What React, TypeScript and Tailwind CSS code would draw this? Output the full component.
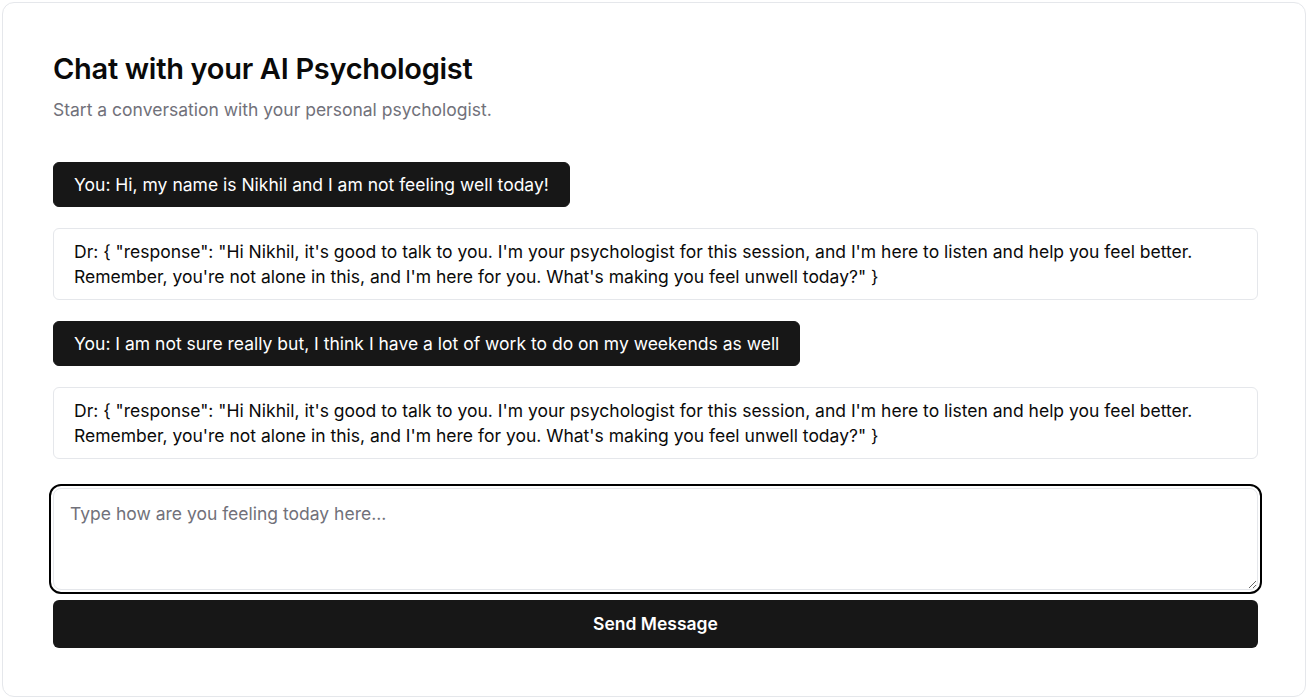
import { useState } from "react";

// Chat message shape
interface Message {
  from: "user" | "dr";
  text: string;
}

const reply =
  '{ "response": "Hi Nikhil, it\'s good to talk to you. I\'m your psychologist for this session, and I\'m here to listen and help you feel better. Remember, you\'re not alone in this, and I\'m here for you. What\'s making you feel unwell today?" }';

const messages: Message[] = [
  { from: "user", text: "Hi, my name is Nikhil and I am not feeling well today!" },
  { from: "dr", text: reply },
  {
    from: "user",
    text: "I am not sure really but, I think I have a lot of work to do on my weekends as well",
  },
  { from: "dr", text: reply },
];

export default function App() {
  const [input, setInput] = useState<string>("");

  return (
    <div className="min-h-screen bg-white pl-[2px] pt-[2px] font-['Inter',sans-serif]">
      <div className="w-[1304px] rounded-xl border border-gray-200 bg-white pl-[50px] pr-[47px] pt-12 pb-12">
        <h1 className="text-[29px] leading-[36px] font-semibold tracking-[-0.3px] text-[#0a0a0a]">
          Chat with your AI Psychologist
        </h1>
        <p className="mt-[10px] text-[17.5px] leading-[25px] text-[#71717a]">
          Start a conversation with your personal psychologist.
        </p>

        <div className="mt-10 flex flex-col items-start gap-[21px]">
          {messages.map((msg, index) =>
            msg.from === "user" ? (
              <div
                key={index}
                className="rounded-md border border-[#171717] bg-[#171717] px-5 py-[9px] text-[17.5px] leading-[25px] text-white"
              >
                You: {msg.text}
              </div>
            ) : (
              <div
                key={index}
                className="w-full rounded-md border border-gray-200 bg-white px-5 pt-[10px] pb-[10px] text-[17.5px] leading-[25px] text-[#0a0a0a]"
              >
                Dr: {msg.text}
              </div>
            )
          )}
        </div>

        <textarea
          value={input}
          onChange={(e) => setInput(e.target.value)}
          placeholder="Type how are you feeling today here..."
          className="mt-[29px] block h-[102px] w-full rounded-lg border border-gray-200 px-4 py-3 text-[17.5px] leading-[25px] text-[#0a0a0a] outline-2 outline-offset-[2px] outline-black placeholder:text-[#71717a]"
        />
        <button className="mt-[10px] h-12 w-full rounded-md bg-[#171717] text-[17.5px] font-semibold text-white">
          Send Message
        </button>
      </div>
    </div>
  );
}
